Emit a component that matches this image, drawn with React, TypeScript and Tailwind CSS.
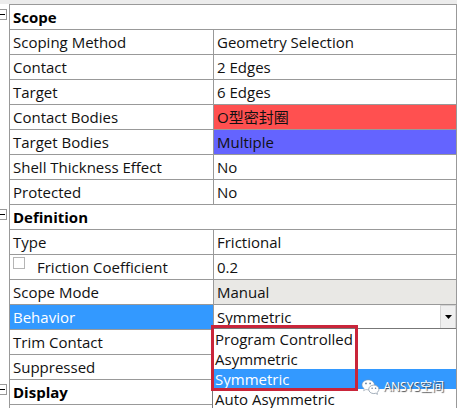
import { Fragment, useState } from 'react'
import { clsx } from 'clsx'

interface Property {
  name: string
  value: string
  tone?: 'red' | 'blue' | 'disabled'
  checkable?: boolean
  choices?: string[]
}

interface Section {
  title: string
  rows: Property[]
}

const sections: Section[] = [
  {
    title: 'Scope',
    rows: [
      { name: 'Scoping Method', value: 'Geometry Selection' },
      { name: 'Contact', value: '2 Edges' },
      { name: 'Target', value: '6 Edges' },
      { name: 'Contact Bodies', value: 'O型密封圈', tone: 'red' },
      { name: 'Target Bodies', value: 'Multiple', tone: 'blue' },
      { name: 'Shell Thickness Effect', value: 'No' },
      { name: 'Protected', value: 'No' }
    ]
  },
  {
    title: 'Definition',
    rows: [
      { name: 'Type', value: 'Frictional' },
      { name: 'Friction Coefficient', value: '0.2', checkable: true },
      { name: 'Scope Mode', value: 'Manual', tone: 'disabled' },
      {
        name: 'Behavior',
        value: 'Symmetric',
        choices: ['Program Controlled', 'Asymmetric', 'Symmetric', 'Auto Asymmetric']
      },
      { name: 'Trim Contact', value: '' },
      { name: 'Suppressed', value: '' }
    ]
  },
  { title: 'Display', rows: [] }
]

function BehaviorSelect({ choices, initial }: { choices: string[]; initial: string }) {
  const [selected, setSelected] = useState(initial)

  return (
    <>
      <div className="relative flex h-6">
        <select
          id="behavior"
          value={selected}
          onChange={(e) => setSelected(e.target.value)}
          className="w-full appearance-none bg-white pl-[3px] outline-none"
        >
          {choices.map(choice => (
            <option key={choice} value={choice}>{choice}</option>
          ))}
        </select>
        <span className="pointer-events-none absolute inset-y-0 right-0 flex w-4 items-center justify-center border border-[#d4d4d4] bg-[#efefef]">
          <svg viewBox="0 0 7 4" className="h-1 w-[7px]" aria-hidden="true">
            <path d="M0 0h7L3.500 4z" fill="#000" />
          </svg>
        </span>
      </div>

      {/* Open list */}
      <div className="absolute top-[23px] -left-0.5 right-0 z-10 border-t border-l border-[#777] bg-white">
        <ul role="listbox" aria-label="Behavior">
          {choices.map(choice => (
            <li
              key={choice}
              role="option"
              aria-selected={choice === selected}
              onClick={() => setSelected(choice)}
              className={clsx(
                'h-5 cursor-default pl-0.5 leading-5',
                choice === selected && 'bg-[#3399ff] text-white'
              )}
            >
              {choice}
            </li>
          ))}
        </ul>
        <div className="pointer-events-none absolute -top-1 -left-0.5 h-[66px] w-[147px] border-3 border-[#c9253a]" />
        <Watermark />
      </div>
    </>
  )
}

function Watermark() {
  return (
    <div className="pointer-events-none absolute top-12 right-3 flex items-center gap-1 text-xs leading-5 whitespace-nowrap text-white [text-shadow:1px_1px_1px_#444]">
      <svg viewBox="0 0 20 17" className="h-4 w-[19px]" aria-hidden="true">
        <path
          d="M7.500 1C3.700 1 1 3.300 1 6.200c0 1.700.9 3.100 2.300 4.100L2.700 12.500l2.400-1.300c.8.200 1.600.3 2.400.3 3.800 0 6.600-2.400 6.600-5.300S11.300 1 7.500 1z"
          fill="#fff"
          stroke="#8795a6"
          strokeWidth=".6"
        />
        <path
          d="M13.500 6.500c-3 0-5.400 2-5.400 4.500s2.400 4.500 5.400 4.500c.7 0 1.300-.1 1.900-.3l2 1.100-.5-1.900c1.200-.8 2-2 2-3.400 0-2.500-2.400-4.500-5.400-4.500z"
          fill="#fff"
          stroke="#8795a6"
          strokeWidth=".8"
        />
        <g fill="#647b95">
          <circle cx="5.200" cy="4.700" r=".9" />
          <circle cx="9.600" cy="4.700" r=".9" />
          <circle cx="11.700" cy="9.700" r=".8" />
          <circle cx="15.400" cy="9.700" r=".8" />
        </g>
      </svg>
      <span>ANSYS空间</span>
    </div>
  )
}

export default function App() {
  const [collapsed, setCollapsed] = useState<string[]>([])

  const toggle = (title: string) => {
    setCollapsed(collapsed.includes(title) ? collapsed.filter(t => t !== title) : [...collapsed, title])
  }

  return (
    <div className="overflow-hidden border-t-4 border-[#ececec] bg-white font-['Open_Sans','Noto_Sans_CJK_SC',sans-serif] text-[15px] leading-[22px] text-[#111]">
      <table className="w-full table-fixed border-separate border-spacing-0">
        <colgroup>
          <col className="w-[9px]" />
          <col className="w-[204px]" />
          <col />
        </colgroup>
        <tbody>
          {sections.map(section => (
            <Fragment key={section.title}>
              <tr className="h-[25px]">
                <td className="p-0">
                  <button
                    type="button"
                    aria-label={`Toggle ${section.title}`}
                    onClick={() => toggle(section.title)}
                    className="-ml-1 mb-1 flex h-[11px] w-[11px] items-center justify-center border border-[#999] bg-white"
                  >
                    <span className="h-px w-[7px] bg-black" />
                  </button>
                </td>
                <th colSpan={2} className="border-x border-t border-[#999] p-0 pl-[3px] text-left font-bold text-black">
                  {section.title}
                </th>
              </tr>

              {!collapsed.includes(section.title) && section.rows.map(row => (
                <tr key={row.name} className="h-[25px]">
                  <td className="p-0" />
                  <th
                    className={clsx(
                      'border-t border-l border-[#999] p-0 pl-[3px] text-left font-normal whitespace-nowrap',
                      row.choices && 'bg-[#3399ff] text-white'
                    )}
                  >
                    {row.checkable ? (
                      <label className="flex items-center gap-3">
                        <input type="checkbox" className="mb-2 size-3 appearance-none border border-[#b5b5b5] bg-white" />
                        {row.name}
                      </label>
                    ) : row.choices ? (
                      <label htmlFor="behavior">{row.name}</label>
                    ) : (
                      row.name
                    )}
                  </th>
                  <td
                    className={clsx(
                      'relative border-x border-t border-[#999] p-0 whitespace-nowrap',
                      !row.choices && 'pl-[3px]',
                      row.tone === 'red' && 'bg-[#ff5050]',
                      row.tone === 'blue' && 'bg-[#6464ff]',
                      row.tone === 'disabled' && 'bg-[#e9e8e5]'
                    )}
                  >
                    {row.choices ? <BehaviorSelect choices={row.choices} initial={row.value} /> : row.value}
                  </td>
                </tr>
              ))}
            </Fragment>
          ))}
          <tr className="h-1">
            <td className="p-0" />
            <td className="border-t border-l border-[#999] p-0" />
            <td className="border-x border-t border-[#999] p-0" />
          </tr>
        </tbody>
      </table>
    </div>
  )
}
